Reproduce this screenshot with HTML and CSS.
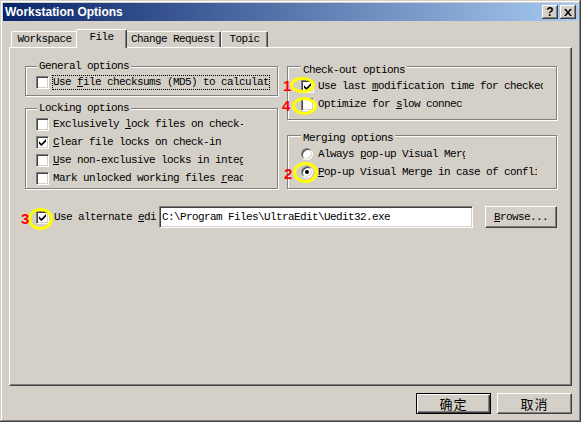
FILE: index.html
```html
<!DOCTYPE html>
<html>
<head>
<meta charset="utf-8">
<title>Workstation Options</title>
<link rel="stylesheet" href="styles.css">
</head>
<body>
<div class="window">
  <div class="titlebar">
    <span class="title">Workstation Options</span>
    <div class="caps">
      <div class="cap cap-help">?</div>
      <div class="cap"><svg class="x-icon" viewBox="0 0 8 7" width="8" height="7"><path d="M0 0h2l2 2.5L6 0h2L5 3.5 8 7H6L4 4.5 2 7H0l3-3.5z"/></svg></div>
    </div>
  </div>

  <div class="tabs">
    <div class="tab tab-workspace">Workspace</div>
    <div class="tab tab-file active">File</div>
    <div class="tab tab-cr">Change Request</div>
    <div class="tab tab-topic">Topic</div>
  </div>

  <div class="panel">
    <div class="groups">
      <div class="col col-left">
        <div class="group g-general">
          <div class="legend">General options</div>
          <div class="row">
            <span class="cb"></span>
            <span class="lbl w216 focus">Use <u>f</u>ile checksums (MD5) to calculate differences</span>
          </div>
        </div>
        <div class="group g-locking">
          <div class="legend">Locking options</div>
          <div class="row"><span class="cb"></span><span class="lbl w190">Exclusively <u>l</u>ock files on check-out</span></div>
          <div class="row"><span class="cb checked"><svg viewBox="0 0 7 7" width="7" height="7"><path d="M0 2.3 2.4 4.7 7 0v2.5L2.4 7.1 0 4.7z"/></svg></span><span class="lbl w190"><u>C</u>lear file locks on check-in</span></div>
          <div class="row"><span class="cb"></span><span class="lbl w190"><u>U</u>se non-exclusive locks in integration</span></div>
          <div class="row"><span class="cb"></span><span class="lbl w190">Mark unlocked working files <u>r</u>ead-only</span></div>
        </div>
      </div>
      <div class="col col-right">
        <div class="group g-checkout">
          <div class="legend">Check-out options</div>
          <div class="row"><span class="cb checked"><svg viewBox="0 0 7 7" width="7" height="7"><path d="M0 2.3 2.4 4.7 7 0v2.5L2.4 7.1 0 4.7z"/></svg></span><span class="lbl w225">Use last <u>m</u>odification time for checked out files</span></div>
          <div class="row"><span class="cb"></span><span class="lbl w145">Optimize for <u>s</u>low connections</span></div>
        </div>
        <div class="group g-merging">
          <div class="legend">Merging options</div>
          <div class="row"><span class="rb"></span><span class="lbl w147">Always <u>p</u>op-up Visual Merge</span></div>
          <div class="row"><span class="rb checked"></span><span class="lbl w219"><u>P</u>op-up Visual Merge in case of conflicts</span></div>
        </div>
      </div>
    </div>

    <div class="editor">
      <span class="cb checked"><svg viewBox="0 0 7 7" width="7" height="7"><path d="M0 2.3 2.4 4.7 7 0v2.5L2.4 7.1 0 4.7z"/></svg></span>
      <span class="lbl w103">Use alternate <u>e</u>ditor</span>
      <input class="path" type="text" value="C:\Program Files\UltraEdit\Uedit32.exe">
      <button class="btn browse"><u>B</u>rowse...</button>
    </div>
  </div>

  <div class="footer">
    <button class="btn cjk default">确定</button>
    <button class="btn cjk">取消</button>
  </div>

  <div class="ring ring-1"></div>
  <div class="ring ring-4"></div>
  <div class="ring ring-2"></div>
  <div class="ring ring-3"></div>
  <div class="num num-1">1</div>
  <div class="num num-4">4</div>
  <div class="num num-2">2</div>
  <div class="num num-3">3</div>
</div>
</body>
</html>
```

FILE: styles.css
```css
* { box-sizing: border-box; }
html, body { margin: 0; padding: 0; background: #D4D0C8; }
body {
  font-family: "Liberation Mono", "DejaVu Sans Mono", monospace;
  font-size: 11px;
  letter-spacing: -0.6px;
  color: #000;
}

.window {
  position: relative;
  width: 581px;
  height: 422px;
  padding: 3px;
  background: #D4D0C8;
  display: flex;
  flex-direction: column;
  box-shadow: inset -1px -1px 0 #404040, inset 1px 1px 0 #D4D0C8,
              inset -2px -2px 0 #808080, inset 2px 2px 0 #fff;
}

/* title bar */
.titlebar {
  height: 18px;
  display: flex;
  align-items: center;
  justify-content: space-between;
  background: linear-gradient(90deg, #0A246A 0%, #A6CAF0 100%);
}
.title {
  padding-left: 2px;
  font-family: "Liberation Sans", Arial, sans-serif;
  font-weight: bold;
  font-size: 12px;
  letter-spacing: 0;
  color: #fff;
  line-height: 18px;
}
.caps { display: flex; gap: 2px; margin-right: 2px; }
.cap {
  width: 16px;
  height: 14px;
  background: #D4D0C8;
  display: flex;
  align-items: center;
  justify-content: center;
  box-shadow: inset -1px -1px 0 #404040, inset 1px 1px 0 #fff,
              inset -2px -2px 0 #808080;
}
.cap-help {
  font-family: "Liberation Sans", Arial, sans-serif;
  font-weight: bold;
  font-size: 12px;
  letter-spacing: 0;
  line-height: 14px;
  padding-bottom: 1px;
}
.x-icon { display: block; fill: #000; }

/* tabs */
.tabs {
  height: 26px;
  display: flex;
  align-items: flex-end;
  padding-left: 8px;
  position: relative;
  z-index: 1;
}
.tab {
  height: 16px;
  border-top: 1px solid #fff;
  border-left: 1px solid #fff;
  border-right: 1px solid #404040;
  border-radius: 2px 2px 0 0;
  box-shadow: inset -1px 0 0 #808080;
  background: #D4D0C8;
  text-align: center;
  line-height: 14px;
  white-space: nowrap;
}
.tab-workspace { width: 67px; }
.tab-file { width: 51px; }
.tab-cr { width: 96px; }
.tab-topic { width: 47px; }
.tab.active {
  height: 19px;
  margin: 0 -2px -1px -2px;
  position: relative;
  z-index: 2;
  line-height: 15px;
}

/* panel */
.panel {
  margin: 0 6px;
  height: 339px;
  border: 1px solid;
  border-color: #fff #404040 #404040 #fff;
  box-shadow: inset -1px -1px 0 #808080;
}
.groups {
  display: flex;
  gap: 9px;
  margin: 18px 0 0 15px;
}
.col { display: flex; flex-direction: column; }
.col-left { width: 253px; gap: 12px; }
.col-right { width: 270px; gap: 15px; }

.group {
  display: flex;
  flex-direction: column;
  border: 1px solid #808080;
  box-shadow: inset 1px 1px 0 #fff, 1px 1px 0 #fff;
}
.legend {
  align-self: flex-start;
  margin: -7px 0 0 11px;
  padding: 0 2px;
  line-height: 13px;
  background: #D4D0C8;
  white-space: nowrap;
}
.col-right .legend { margin-left: 13px; }

.g-general { padding-bottom: 4px; }
.g-locking { padding-bottom: 1px; }
.g-checkout { padding-top: 4px; padding-bottom: 6px; }
.g-merging { padding-top: 3px; padding-bottom: 7px; }

.row {
  height: 18px;
  display: flex;
  align-items: center;
  padding-left: 10px;
}
.col-right .row { padding-left: 13px; }

.lbl {
  margin-left: 4px;
  white-space: nowrap;
  overflow: hidden;
  line-height: 13px;
}
.lbl u { text-underline-offset: 1px; }
.focus { outline: 1px dotted #000; outline-offset: 0; }
.w216 { width: 216px; }
.w190 { width: 190px; }
.w225 { width: 225px; }
.w145 { width: 145px; }
.w147 { width: 147px; }
.w219 { width: 219px; }
.w103 { width: 103px; }

/* checkbox */
.cb {
  flex: none;
  width: 13px;
  height: 13px;
  background: #fff;
  border: 1px solid;
  border-color: #808080 #fff #fff #808080;
  box-shadow: inset 1px 1px 0 #404040, inset -1px -1px 0 #D4D0C8;
  display: flex;
  align-items: center;
  justify-content: center;
}
.cb svg { display: block; fill: #000; }

/* radio */
.rb {
  flex: none;
  position: relative;
  width: 12px;
  height: 12px;
  border-radius: 50%;
  background: #fff;
  border: 1px solid;
  border-color: #808080 #fff #fff #808080;
  box-shadow: inset 1px 1px 0 #404040, inset -1px -1px 0 #D4D0C8;
  margin-right: 1px;
}
.rb.checked::after {
  content: "";
  position: absolute;
  left: 3px;
  top: 3px;
  width: 4px;
  height: 4px;
  border-radius: 50%;
  background: #000;
}

/* alternate editor row */
.editor {
  height: 22px;
  margin-top: 17px;
  padding-left: 26px;
  display: flex;
  align-items: center;
}
.editor .lbl { margin-left: 5px; }
.path {
  margin: 0 0 0 2px;
  width: 314px;
  height: 22px;
  padding: 0 2px;
  background: #fff;
  border: 1px solid;
  border-color: #808080 #fff #fff #808080;
  box-shadow: inset 1px 1px 0 #404040, inset -1px -1px 0 #D4D0C8;
  font: inherit;
  letter-spacing: inherit;
  color: #000;
  outline: none;
}

.btn {
  font: inherit;
  letter-spacing: inherit;
  color: #000;
  background: #D4D0C8;
  border: 1px solid;
  border-color: #fff #404040 #404040 #fff;
  box-shadow: inset -1px -1px 0 #808080;
  padding: 0;
  margin: 0;
}
.browse { margin-left: 12px; width: 72px; height: 22px; }

.footer {
  display: flex;
  justify-content: flex-end;
  gap: 6px;
  margin: 7px 6px 0 0;
}
.footer .btn { width: 75px; height: 21px; }
.cjk {
  font-family: "Noto Sans CJK SC", sans-serif;
  font-size: 13px;
  letter-spacing: 1px;
  line-height: 17px;
}
.btn.default {
  border-color: #000;
  box-shadow: inset 1px 1px 0 #fff, inset -1px -1px 0 #404040,
              inset -2px -2px 0 #808080;
}

/* annotation overlays */
.ring {
  position: absolute;
  border: 3px solid #FFFF00;
  border-radius: 50%;
  z-index: 5;
}
.ring-1 { left: 290px; top: 77px; width: 25px; height: 16px; }
.ring-4 { left: 292px; top: 97px; width: 25px; height: 18px; }
.ring-2 { left: 293px; top: 162px; width: 25px; height: 21px; }
.ring-3 { left: 28px; top: 208px; width: 25px; height: 22px; }

.num {
  position: absolute;
  z-index: 6;
  font-family: "Liberation Sans", Arial, sans-serif;
  font-weight: bold;
  font-size: 15px;
  line-height: 15px;
  letter-spacing: 0;
  color: #FF0000;
}
.num-1 { left: 283px; top: 78px; }
.num-4 { left: 282px; top: 98px; }
.num-2 { left: 284px; top: 166px; }
.num-3 { left: 21px; top: 211px; }
```
